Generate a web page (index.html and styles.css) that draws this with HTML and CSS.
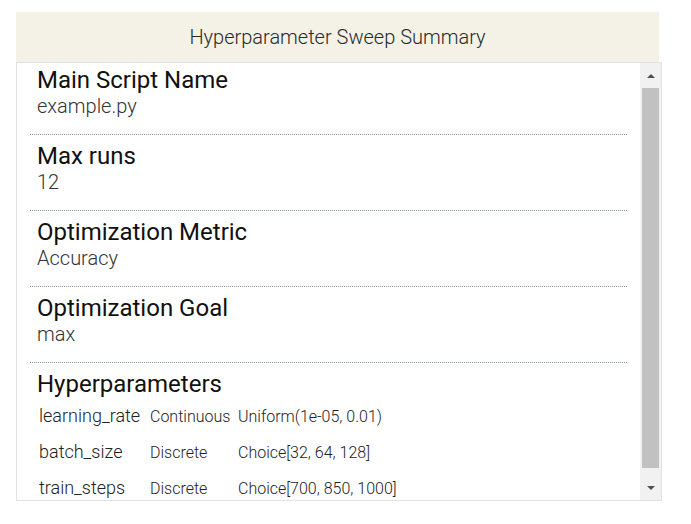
FILE: index.html
```html
<!DOCTYPE html>
<html lang="en">
<head>
<meta charset="utf-8">
<title>Hyperparameter Sweep Summary</title>
<link rel="stylesheet" href="styles.css">
</head>
<body>
<div class="wrap">
  <div class="header">Hyperparameter Sweep Summary</div>
  <div class="panel">
    <div class="content">
      <div class="section first">
        <div class="title">Main Script Name</div>
        <div class="value">example.py</div>
      </div>
      <div class="section">
        <div class="title">Max runs</div>
        <div class="value">12</div>
      </div>
      <div class="section">
        <div class="title">Optimization Metric</div>
        <div class="value">Accuracy</div>
      </div>
      <div class="section">
        <div class="title">Optimization Goal</div>
        <div class="value">max</div>
      </div>
      <div class="section last">
        <div class="title">Hyperparameters</div>
        <div class="params">
          <div class="pname">learning_rate</div><div class="ptype">Continuous</div><div class="pdist">Uniform(1e-05, 0.01)</div>
          <div class="pname">batch_size</div><div class="ptype">Discrete</div><div class="pdist">Choice[32, 64, 128]</div>
          <div class="pname">train_steps</div><div class="ptype">Discrete</div><div class="pdist">Choice[700, 850, 1000]</div>
        </div>
      </div>
    </div>
    <div class="scrollbar">
      <div class="arrow up"></div>
      <div class="track"><div class="thumb"></div></div>
      <div class="arrow down"></div>
    </div>
  </div>
</div>
</body>
</html>
```

FILE: styles.css
```css
html, body {
  margin: 0;
  padding: 0;
  background: #ffffff;
}

body {
  font-family: Roboto, "Liberation Sans", sans-serif;
}

.wrap {
  padding: 12px 0 0 16px;
  width: 646px;
}

.header {
  width: 643px;
  height: 50px;
  background: #f4f1e6;
  color: #2a2a2a;
  font-weight: 300;
  font-size: 20px;
  line-height: 50px;
  text-align: center;
}

.panel {
  display: flex;
  height: 439px;
  box-sizing: border-box;
  border: 1px solid #e2e2e2;
}

.content {
  flex: 1;
  overflow: hidden;
  padding: 0 13px;
}

.section {
  padding: 7px 7px 16px;
  border-bottom: 1px dotted #8f9a9a;
}

.section.first {
  padding-top: 3px;
}

.section.last {
  border-bottom: none;
}

.title {
  font-size: 24px;
  line-height: 28px;
  color: #111111;
}

.value {
  font-size: 20px;
  line-height: 24px;
  font-weight: 300;
  color: #333333;
}

.params {
  display: grid;
  grid-template-columns: 111px 88px 1fr;
  align-items: baseline;
  padding-left: 2px;
}

.pname {
  font-size: 18px;
  line-height: 35px;
  font-weight: 300;
  color: #222222;
}

.ptype, .pdist {
  font-size: 16px;
  line-height: 35px;
  font-weight: 300;
  color: #222222;
}

.scrollbar {
  width: 21px;
  background: #f1f1f1;
  display: flex;
  flex-direction: column;
}

.arrow {
  height: 25px;
  display: flex;
  align-items: center;
  justify-content: center;
}

.arrow::before {
  content: "";
  width: 0;
  height: 0;
  border-left: 4px solid transparent;
  border-right: 4px solid transparent;
}

.arrow.up::before {
  border-bottom: 4px solid #505050;
}

.arrow.down::before {
  border-top: 4px solid #505050;
}

.track {
  flex: 1;
  padding: 0 2px;
}

.thumb {
  height: 380px;
  background: #c1c1c1;
}
```
